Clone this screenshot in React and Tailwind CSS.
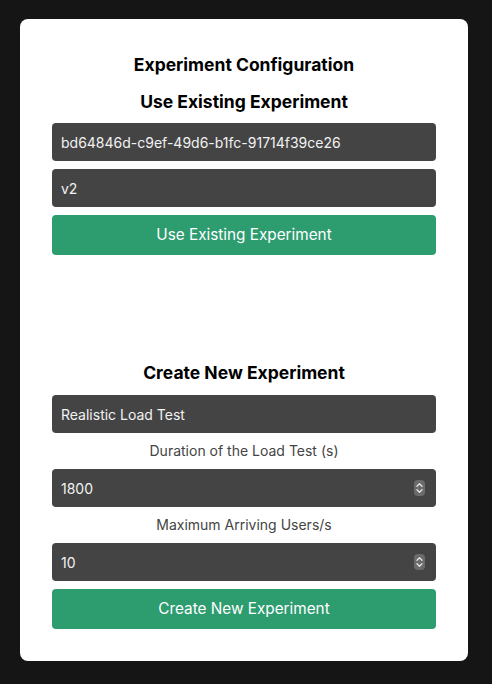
import React from "react";

function Spinner() {
  return (
    <svg width="11" height="16" viewBox="0 0 11 16" className="shrink-0">
      <rect x="0" y="0" width="11" height="16" rx="4" fill="#6b6b6b" />
      <path d="M3 6.2 L5.5 3.8 L8 6.2" stroke="#e6e6e6" strokeWidth="1.3" fill="none" strokeLinecap="round" strokeLinejoin="round" />
      <path d="M3 9.8 L5.5 12.2 L8 9.8" stroke="#e6e6e6" strokeWidth="1.3" fill="none" strokeLinecap="round" strokeLinejoin="round" />
    </svg>
  );
}

function Field({ value, number }) {
  return (
    <div className="flex h-[38px] items-center rounded-[4px] bg-[#444444] pl-[9px] pr-[11px]">
      <input
        readOnly
        value={value}
        className="min-w-0 flex-1 bg-transparent text-[14px] text-[#f2f2f2] outline-none"
      />
      {number && <Spinner />}
    </div>
  );
}

function Btn({ children }) {
  return (
    <button className="flex h-[40px] w-full items-center justify-center rounded-[4px] bg-[#2d9c6f] text-[15.3px] text-white">
      {children}
    </button>
  );
}

export default function App() {
  return (
    <div
      className="min-h-[684px] bg-[#151515] pl-[20px] pr-[24px] pt-[19px] pb-[23px]"
      style={{ fontFamily: "Inter, 'Noto Sans', sans-serif" }}
    >
      <div className="flex h-[642px] flex-col rounded-[8px] bg-white px-[32px] pt-[32px]">
        <h2 className="h-[27px] text-center text-[17.5px] font-bold leading-[27px] text-black">
          Experiment Configuration
        </h2>
        <h3 className="mt-[10px] h-[27px] text-center text-[17.5px] font-bold leading-[27px] text-black">
          Use Existing Experiment
        </h3>
        <div className="mt-[8px] flex flex-col gap-[8px]">
          <Field value="bd64846d-c9ef-49d6-b1fc-91714f39ce26" />
          <Field value="v2" />
          <Btn>Use Existing Experiment</Btn>
        </div>
        <h3 className="mt-[104px] h-[27px] text-center text-[17.5px] font-bold leading-[27px] text-black">
          Create New Experiment
        </h3>
        <div className="mt-[9px] flex flex-col">
          <Field value="Realistic Load Test" />
          <label className="my-[8px] h-[20px] text-center text-[14px] leading-[20px] text-[#444444]">
            Duration of the Load Test (s)
          </label>
          <Field value="1800" number />
          <label className="my-[8px] h-[20px] text-center text-[14px] leading-[20px] text-[#444444]">
            Maximum Arriving Users/s
          </label>
          <Field value="10" number />
          <div className="mt-[8px]">
            <Btn>Create New Experiment</Btn>
          </div>
        </div>
      </div>
    </div>
  );
}
